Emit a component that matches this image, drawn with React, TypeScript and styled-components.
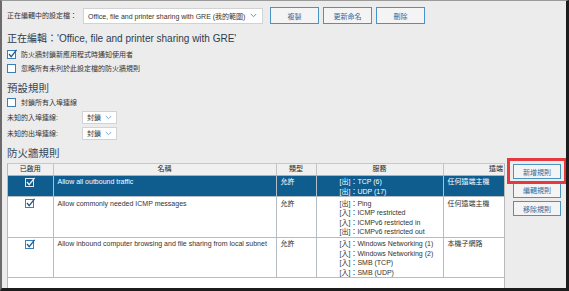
import styled, { createGlobalStyle } from 'styled-components'

const GlobalStyle = createGlobalStyle`
  html, body {
    margin: 0;
    padding: 0;
    background: #ececec;
  }
  body {
    font-family: "Liberation Sans", "Noto Sans CJK TC", sans-serif;
  }
  * {
    box-sizing: border-box;
  }
`

type Rule = {
  name: string
  type: string
  services: string[]
  remote: string
  selected?: boolean
}

const rules: Rule[] = [
  {
    name: 'Allow all outbound traffic',
    type: '允許',
    services: ['[出]：TCP (6)', '[出]：UDP (17)'],
    remote: '任何遠端主機',
    selected: true,
  },
  {
    name: 'Allow commonly needed ICMP messages',
    type: '允許',
    services: [
      '[出]：Ping',
      '[入]：ICMP restricted',
      '[入]：ICMPv6 restricted in',
      '[出]：ICMPv6 restricted out',
    ],
    remote: '任何遠端主機',
  },
  {
    name: 'Allow inbound computer browsing and file sharing from local subnet',
    type: '允許',
    services: [
      '[入]：Windows Networking (1)',
      '[入]：Windows Networking (2)',
      '[入]：SMB (TCP)',
      '[入]：SMB (UDP)',
    ],
    remote: '本機子網路',
  },
]

const Chevron = ({ color = '#5b93c6' }: { color?: string }) => (
  <svg width="7" height="5" viewBox="0 0 7 5">
    <path d="M0.8 1 L3.5 3.7 L6.2 1" fill="none" stroke={color} strokeWidth="1" />
  </svg>
)

const CheckBox = ({ checked, light }: { checked?: boolean; light?: boolean }) => (
  <svg width="11" height="10" viewBox="0 0 11 10">
    <rect
      x="0.5"
      y="1.5"
      width="8"
      height="8"
      fill={light ? 'none' : '#fff'}
      stroke={light ? '#dce8f5' : '#3b7fb8'}
      strokeWidth="1"
    />
    {checked && (
      <path
        d="M2 5 L4.2 7.6 L9.6 0.8"
        fill="none"
        stroke={light ? '#e8f0fa' : '#1f5a94'}
        strokeWidth="1.3"
      />
    )}
  </svg>
)

const App = () => {
  return (
    <Frame>
      <GlobalStyle />
      <Toolbar>
        <Label>正在編輯中的設定檔：</Label>
        <Dropdown>
          <span>Office, file and printer sharing with GRE (我的範圍)</span>
          <Chevron />
        </Dropdown>
        <ButtonGroup>
          <ActionButton>複製</ActionButton>
          <ActionButton>更新命名</ActionButton>
          <ActionButton>刪除</ActionButton>
        </ButtonGroup>
      </Toolbar>

      <Title>正在編輯：'Office, file and printer sharing with GRE'</Title>
      <CheckRow>
        <CheckBox checked />
        <span>防火牆封鎖新應用程式時通知使用者</span>
      </CheckRow>
      <CheckRow>
        <CheckBox />
        <span>忽略所有未列於此設定檔的防火牆規則</span>
      </CheckRow>

      <Heading $top={6}>預設規則</Heading>
      <CheckRow>
        <CheckBox />
        <span>封鎖所有入埠連線</span>
      </CheckRow>
      <SelectRow>
        <SelectLabel>未知的入埠連線:</SelectLabel>
        <SmallSelect>
          <span>封鎖</span>
          <Chevron color="#7aaad6" />
        </SmallSelect>
      </SelectRow>
      <SelectRow>
        <SelectLabel>未知的出埠連線:</SelectLabel>
        <SmallSelect>
          <span>封鎖</span>
          <Chevron color="#7aaad6" />
        </SmallSelect>
      </SelectRow>

      <Heading $top={5}>防火牆規則</Heading>
      <Lower>
        <TableWrap>
          <RuleTable>
            <colgroup>
              <col style={{ width: 45 }} />
              <col style={{ width: 223 }} />
              <col style={{ width: 40 }} />
              <col style={{ width: 127 }} />
              <col style={{ width: 62 }} />
            </colgroup>
            <thead>
              <tr>
                <Th>已啟用</Th>
                <Th>名稱</Th>
                <Th>類型</Th>
                <Th>服務</Th>
                <Th $align="right">遠端</Th>
              </tr>
            </thead>
            <tbody>
              {rules.map((r) => (
                <Row key={r.name} $selected={r.selected}>
                  <CheckCell>
                    <CheckBox checked light={r.selected} />
                  </CheckCell>
                  <Td>{r.name}</Td>
                  <Td>{r.type}</Td>
                  <ServiceCell>
                    {r.services.map((s) => (
                      <div key={s}>{s}</div>
                    ))}
                  </ServiceCell>
                  <Td>{r.remote}</Td>
                </Row>
              ))}
            </tbody>
          </RuleTable>
        </TableWrap>
        <Side>
          <Highlight>
            <SideButton>新增規則</SideButton>
            <RedBox />
          </Highlight>
          <SideButton>編輯規則</SideButton>
          <SideButton>移除規則</SideButton>
        </Side>
      </Lower>
    </Frame>
  )
}

const Frame = styled.div`
  width: 569px;
  height: 291px;
  border-top: 1px solid #9a9a9a;
  border-left: 2px solid #6b6b6b;
  border-right: 3px solid #1c1c1c;
  border-bottom: 3px solid #1c1c1c;
  background: #ececec;
  display: flex;
  flex-direction: column;
  padding: 6px 0 0 5px;
  color: #333;
  font-size: 7px;
  overflow: hidden;
`

const Toolbar = styled.div`
  display: flex;
  align-items: center;
  height: 17px;
  flex-shrink: 0;
`

const Label = styled.div`
  width: 76px;
  line-height: 10px;
  white-space: nowrap;
`

const Dropdown = styled.div`
  width: 180px;
  height: 16px;
  background: #fff;
  border: 1px solid #d2d2d2;
  display: flex;
  align-items: center;
  justify-content: space-between;
  padding: 0 5px 0 4px;
  white-space: nowrap;
`

const ButtonGroup = styled.div`
  display: flex;
  gap: 4px;
  margin-left: 7px;
`

const ActionButton = styled.button`
  width: 49px;
  height: 17px;
  padding: 0;
  border: 1px solid #4a92bf;
  background: #f4f4f4;
  color: #2d6a9b;
  font-family: inherit;
  font-size: 7px;
`

const Title = styled.div`
  margin-top: 7px;
  font-size: 10px;
  line-height: 16px;
  color: #2b3d50;
  white-space: nowrap;
  flex-shrink: 0;
`

const CheckRow = styled.div`
  display: flex;
  align-items: center;
  gap: 3px;
  height: 14px;
  flex-shrink: 0;
  white-space: nowrap;
`

const Heading = styled.div<{ $top: number }>`
  margin-top: ${(p) => p.$top}px;
  font-size: 10.5px;
  line-height: 14px;
  color: #34475a;
  flex-shrink: 0;
`

const SelectRow = styled.div`
  display: flex;
  align-items: center;
  height: 16px;
  flex-shrink: 0;
`

const SelectLabel = styled.div`
  width: 75px;
  white-space: nowrap;
`

const SmallSelect = styled.div`
  width: 35px;
  height: 13px;
  background: #fff;
  border: 1px solid #d2d2d2;
  display: flex;
  align-items: center;
  justify-content: space-between;
  padding: 0 4px;
`

const Lower = styled.div`
  flex: 1;
  display: flex;
  margin-top: 3px;
  min-height: 0;
`

const TableWrap = styled.div`
  width: 498px;
  background: #fff;
  border-left: 1px solid #b9b9b9;
  border-right: 1px solid #b9b9b9;
  border-top: 1px solid #c8c8c8;
  overflow: hidden;
`

const RuleTable = styled.table`
  width: 497px;
  table-layout: fixed;
  border-collapse: collapse;
  font-size: 7px;
`

const Th = styled.th<{ $align?: string }>`
  height: 11px;
  padding: 0 2px;
  background: #f0f0f0;
  border-right: 1px solid #c4c4c4;
  border-bottom: 1px solid #b0b0b0;
  font-weight: normal;
  line-height: 10px;
  color: #222;
  text-align: ${(p) => p.$align || 'center'};
  white-space: nowrap;
  &:last-child {
    border-right: none;
  }
`

const Row = styled.tr<{ $selected?: boolean }>`
  background: ${(p) => (p.$selected ? '#0f5c8e' : '#fff')};
  color: ${(p) => (p.$selected ? '#fff' : '#333')};
`

const Td = styled.td`
  vertical-align: top;
  padding: 1.5px 4px 0;
  line-height: 9.5px;
  border-right: 1px solid #b4bcc4;
  border-bottom: 1px solid #b4bcc4;
  white-space: nowrap;
  overflow: hidden;
  &:last-child {
    border-right: none;
  }
`

const CheckCell = styled(Td)`
  text-align: center;
  padding-top: 1px;
  svg {
    display: inline-block;
  }
`

const ServiceCell = styled(Td)`
  padding-left: 23px;
`

const Side = styled.div`
  flex: 1;
  display: flex;
  flex-direction: column;
  gap: 3.5px;
  padding: 1px 0 0 8px;
`

const Highlight = styled.div`
  position: relative;
  width: 48px;
`

const SideButton = styled.button`
  width: 48px;
  height: 15px;
  padding: 0;
  border: 1px solid #4a92bf;
  background: #f4f4f4;
  color: #2d6a9b;
  font-family: inherit;
  font-size: 7px;
`

const RedBox = styled.div`
  position: absolute;
  top: -6px;
  left: -6px;
  right: -6px;
  bottom: -5px;
  border: 3px solid #e43a3d;
  pointer-events: none;
`

export default App
